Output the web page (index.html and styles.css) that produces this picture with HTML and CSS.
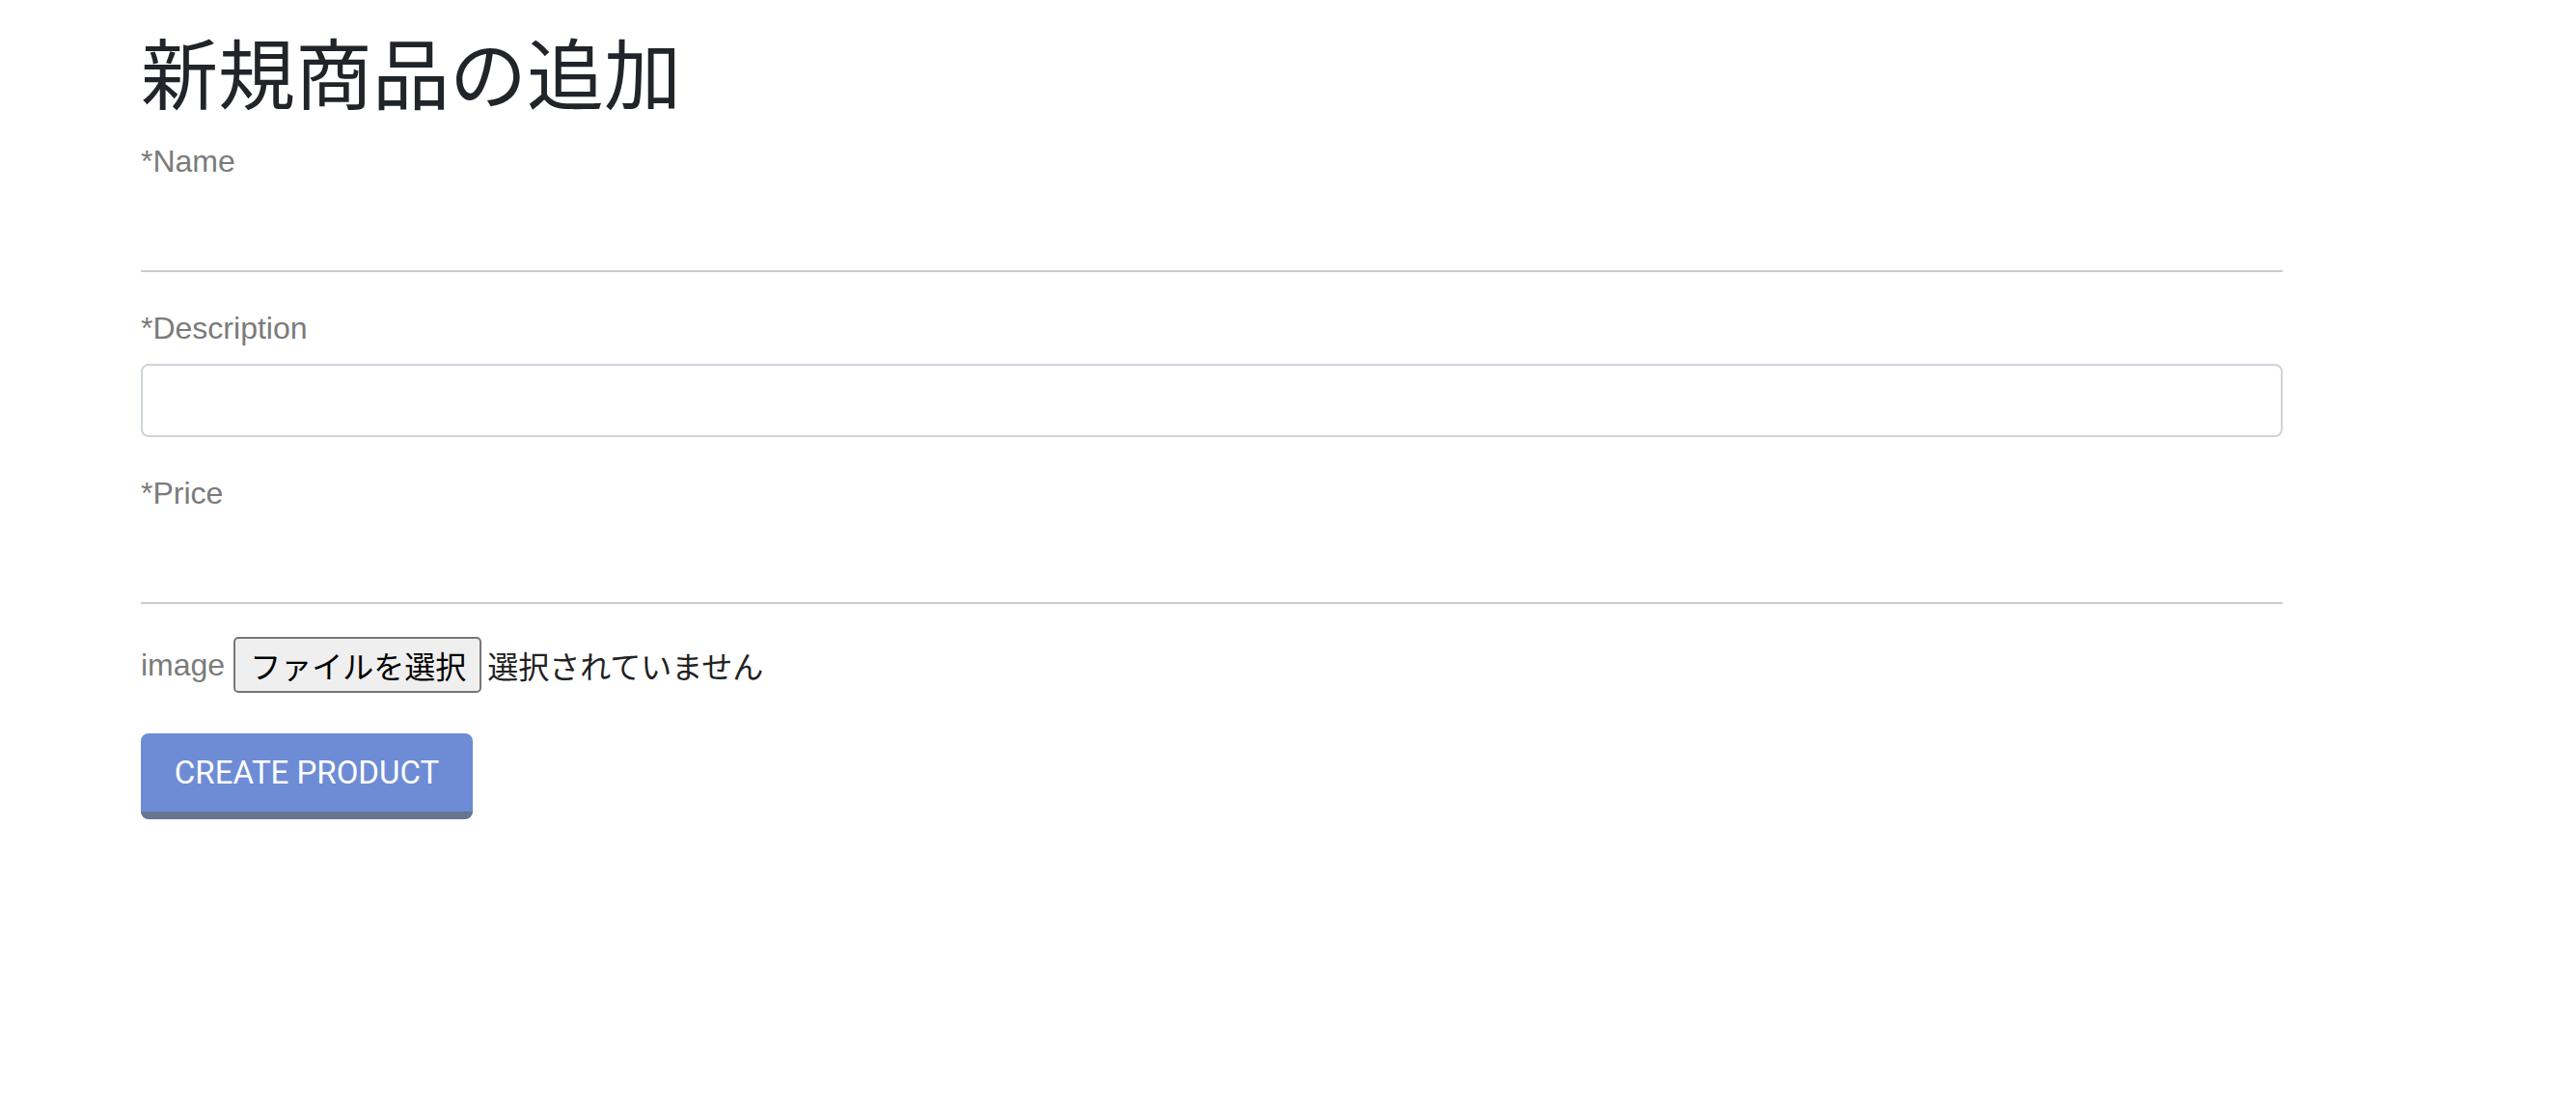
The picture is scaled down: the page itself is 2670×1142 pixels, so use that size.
FILE: index.html
```html
<!DOCTYPE html>
<html lang="ja">
<head>
<meta charset="utf-8">
<title>新規商品の追加</title>
<link rel="stylesheet" href="styles.css">
</head>
<body>
<main class="page">
  <h1 class="title">新規商品の追加</h1>
  <form class="form">
    <div class="group">
      <label class="label">*Name</label>
      <input class="line-input" type="text">
    </div>
    <div class="group">
      <label class="label">*Description</label>
      <input class="box-input" type="text">
    </div>
    <div class="group">
      <label class="label">*Price</label>
      <input class="line-input" type="text">
    </div>
    <div class="file-row">
      <span class="file-label">image</span>
      <span class="file-button">ファイルを選択</span>
      <span class="file-status">選択されていません</span>
    </div>
    <button class="submit" type="button">Create product</button>
  </form>
</main>
</body>
</html>
```

FILE: styles.css
```css
html, body {
  margin: 0;
  padding: 0;
  background: #ffffff;
}
body {
  font-family: "Liberation Sans", Arial, "Noto Sans CJK JP", sans-serif;
  font-size: 32px;
  color: #212529;
}
.page {
  margin-left: 146px;
  width: 2220px;
  display: flex;
  flex-direction: column;
}
.title {
  margin: 24px 0 23px;
  font-family: "Noto Sans CJK JP", sans-serif;
  font-size: 80px;
  font-weight: 400;
  line-height: 96px;
  color: #212529;
}
.form {
  display: flex;
  flex-direction: column;
}
.group {
  display: flex;
  flex-direction: column;
  margin-bottom: 34px;
}
.label {
  font-size: 32px;
  line-height: 48px;
  color: #7b7b7b;
}
.line-input {
  box-sizing: border-box;
  height: 91px;
  margin: 0;
  padding: 0;
  border: none;
  border-bottom: 2px solid #cbcbcb;
  outline: none;
  background: transparent;
  font-size: 32px;
}
.box-input {
  box-sizing: border-box;
  height: 76px;
  margin: 13px 0 0;
  padding: 0 24px;
  border: 2px solid #ced4da;
  border-radius: 8px;
  outline: none;
  background: #fff;
  font-size: 32px;
}
.file-row {
  display: flex;
  align-items: center;
  height: 58px;
}
.file-label {
  color: #7b7b7b;
  font-size: 32px;
  margin-right: 9px;
}
.file-button {
  box-sizing: border-box;
  height: 58px;
  display: flex;
  align-items: center;
  padding: 0 14px 0 15px;
  border: 2px solid #767676;
  border-radius: 5px;
  background: #efefef;
  color: #000;
  font-family: "Noto Sans CJK JP", sans-serif;
  font-size: 32px;
  margin-right: 6px;
}
.file-status {
  color: #222;
  font-family: "Noto Sans CJK JP", sans-serif;
  font-size: 32px;
}
.submit {
  box-sizing: border-box;
  align-self: flex-start;
  width: 344px;
  height: 89px;
  margin-top: 42px;
  padding: 0;
  border: none;
  border-bottom: 8px solid #667592;
  border-radius: 8px;
  background: #6d8cd5;
  color: #ffffff;
  font-family: Roboto, "Liberation Sans", sans-serif;
  font-size: 33px;
  text-transform: uppercase;
  cursor: pointer;
}
```
